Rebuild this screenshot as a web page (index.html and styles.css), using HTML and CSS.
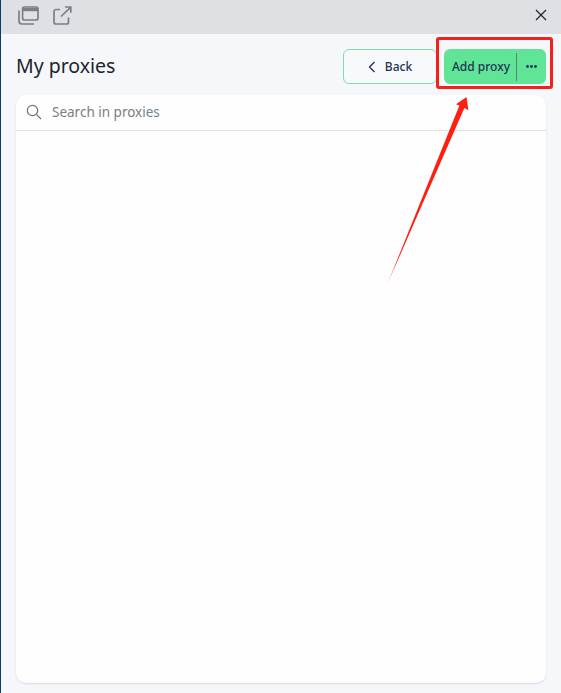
FILE: index.html
```html
<!DOCTYPE html>
<html lang="en">

<head>
    <meta charset="UTF-8">
    <meta name="viewport" content="width=device-width, initial-scale=1.0">
    <title>My proxies</title>
    <link rel="stylesheet" href="styles.css">
</head>

<body>
    <div class="topbar">
        <div class="topbar__icons">
            <svg width="21" height="19" viewBox="0 0 21 19" fill="none" stroke="#7a7f87" stroke-width="1.7">
                <rect x="4.6" y="1" width="15.4" height="13" rx="2"></rect>
                <path d="M4.6 3.6H20" stroke-width="3.2"></path>
                <path d="M1 4.5v10.5a3 3 0 0 0 3 3h12"></path>
            </svg>
            <svg width="19" height="19" viewBox="0 0 19 19" fill="none" stroke="#7a7f87" stroke-width="1.7">
                <path d="M7 3.5H3a2 2 0 0 0-2 2V16a2 2 0 0 0 2 2h10.5a2 2 0 0 0 2-2v-4.5"></path>
                <path d="M8 10.5L17 1.8M12 1h5.8v5.8"></path>
            </svg>
        </div>
        <svg width="12" height="12" viewBox="0 0 12 12" fill="none" stroke="#1c2230" stroke-width="1.2">
            <path d="M1 1l10 10M11 1L1 11"></path>
        </svg>
    </div>

    <div class="content">
        <div class="header">
            <h1>My proxies</h1>
            <div class="header__actions">
                <button class="btn btn--back">
                    <svg width="8" height="12" viewBox="0 0 8 12" fill="none" stroke="#1f3354" stroke-width="1.3">
                        <path d="M6.5 1L1.5 6l5 5"></path>
                    </svg>
                    Back
                </button>
                <button class="btn btn--add">
                    <span class="btn__label">Add proxy</span>
                    <span class="btn__more">
                        <svg width="11" height="3" viewBox="0 0 11 3" fill="#1f3354">
                            <circle cx="1.5" cy="1.5" r="1.4"></circle>
                            <circle cx="5.5" cy="1.5" r="1.4"></circle>
                            <circle cx="9.5" cy="1.5" r="1.4"></circle>
                        </svg>
                    </span>
                </button>
            </div>
        </div>

        <div class="card">
            <div class="search">
                <svg width="16" height="16" viewBox="0 0 16 16" fill="none" stroke="#6d727a" stroke-width="1.2">
                    <circle cx="6.5" cy="6.5" r="5.2"></circle>
                    <path d="M10.4 10.4l4.6 4.6"></path>
                </svg>
                <input class="search__input" type="text" placeholder="Search in proxies">
            </div>
        </div>
    </div>

    <!-- annotation drawn on top of the screenshot -->
    <div class="highlight"></div>
    <svg class="arrow" width="561" height="693" viewBox="0 0 561 693">
        <defs>
            <linearGradient id="tailfade" gradientUnits="userSpaceOnUse" x1="387" y1="285" x2="396" y2="263">
                <stop offset="0" stop-color="#ff2a1a" stop-opacity="0.45"></stop>
                <stop offset="1" stop-color="#ff1f12"></stop>
            </linearGradient>
        </defs>
        <path d="M387 285L459.4 105.6L456 104.2L466.5 97L468.4 110.2L464.4 108Z" fill="url(#tailfade)"></path>
    </svg>
</body>

</html>
```

FILE: styles.css
```css
* {
    box-sizing: border-box;
}

body {
    margin: 0;
    height: 693px;
    overflow: hidden;
    position: relative;
    font-family: "Noto Sans", "Open Sans", sans-serif;
    background-color: #f6f7fb;
    color: #1f3354;
    border-left: 1px solid #0b3a6e;
}

.topbar {
    height: 34px;
    background-color: #dfe0e4;
    display: flex;
    justify-content: space-between;
    align-items: center;
    padding: 0 14px 4px 17px;
}

.topbar__icons {
    display: flex;
    align-items: center;
    gap: 14px;
}

.content {
    padding: 15px 15px 10px 15px;
}

.header {
    display: flex;
    justify-content: space-between;
    align-items: center;
    height: 35px;
    margin-bottom: 11px;
}

h1 {
    margin: 0;
    padding-bottom: 2px;
    font-size: 19.5px;
    font-weight: 400;
    color: #20242c;
}

.header__actions {
    display: flex;
    gap: 7px;
}

.btn {
    height: 35px;
    border-radius: 6px;
    font-family: inherit;
    font-size: 12px;
    font-weight: 500;
    color: #1f3354;
    display: flex;
    align-items: center;
    padding: 0;
}

.btn--back {
    width: 94px;
    justify-content: center;
    gap: 9px;
    background-color: #f8f9fb;
    border: 1px solid #7fdcab;
}

.btn--add {
    width: 102px;
    background-color: #60e597;
    border: none;
}

.btn__label {
    flex: 1;
    text-align: center;
    padding-left: 2px;
    white-space: nowrap;
}

.btn__more {
    width: 30px;
    height: 28px;
    display: flex;
    align-items: center;
    justify-content: center;
    border-left: 1px solid #5d7f78;
}

.card {
    height: 588px;
    background-color: #fefefe;
    border-radius: 10px;
    box-shadow: 0 1px 2px rgba(0, 0, 0, 0.12);
}

.search {
    height: 36px;
    display: flex;
    align-items: center;
    gap: 10px;
    padding: 0 10px 1px;
    border-bottom: 1px solid #e2e3e5;
}

.search__input {
    flex: 1;
    border: none;
    outline: none;
    padding: 0;
    background: transparent;
    font-family: inherit;
    font-size: 13.5px;
}

.search__input::placeholder {
    color: #7b7f86;
    opacity: 1;
}

.highlight {
    position: absolute;
    left: 435px;
    top: 37px;
    width: 117px;
    height: 52px;
    border: 3px solid #f5201c;
    border-radius: 3px;
}

.arrow {
    position: absolute;
    left: -1px;
    top: 0;
}
```
